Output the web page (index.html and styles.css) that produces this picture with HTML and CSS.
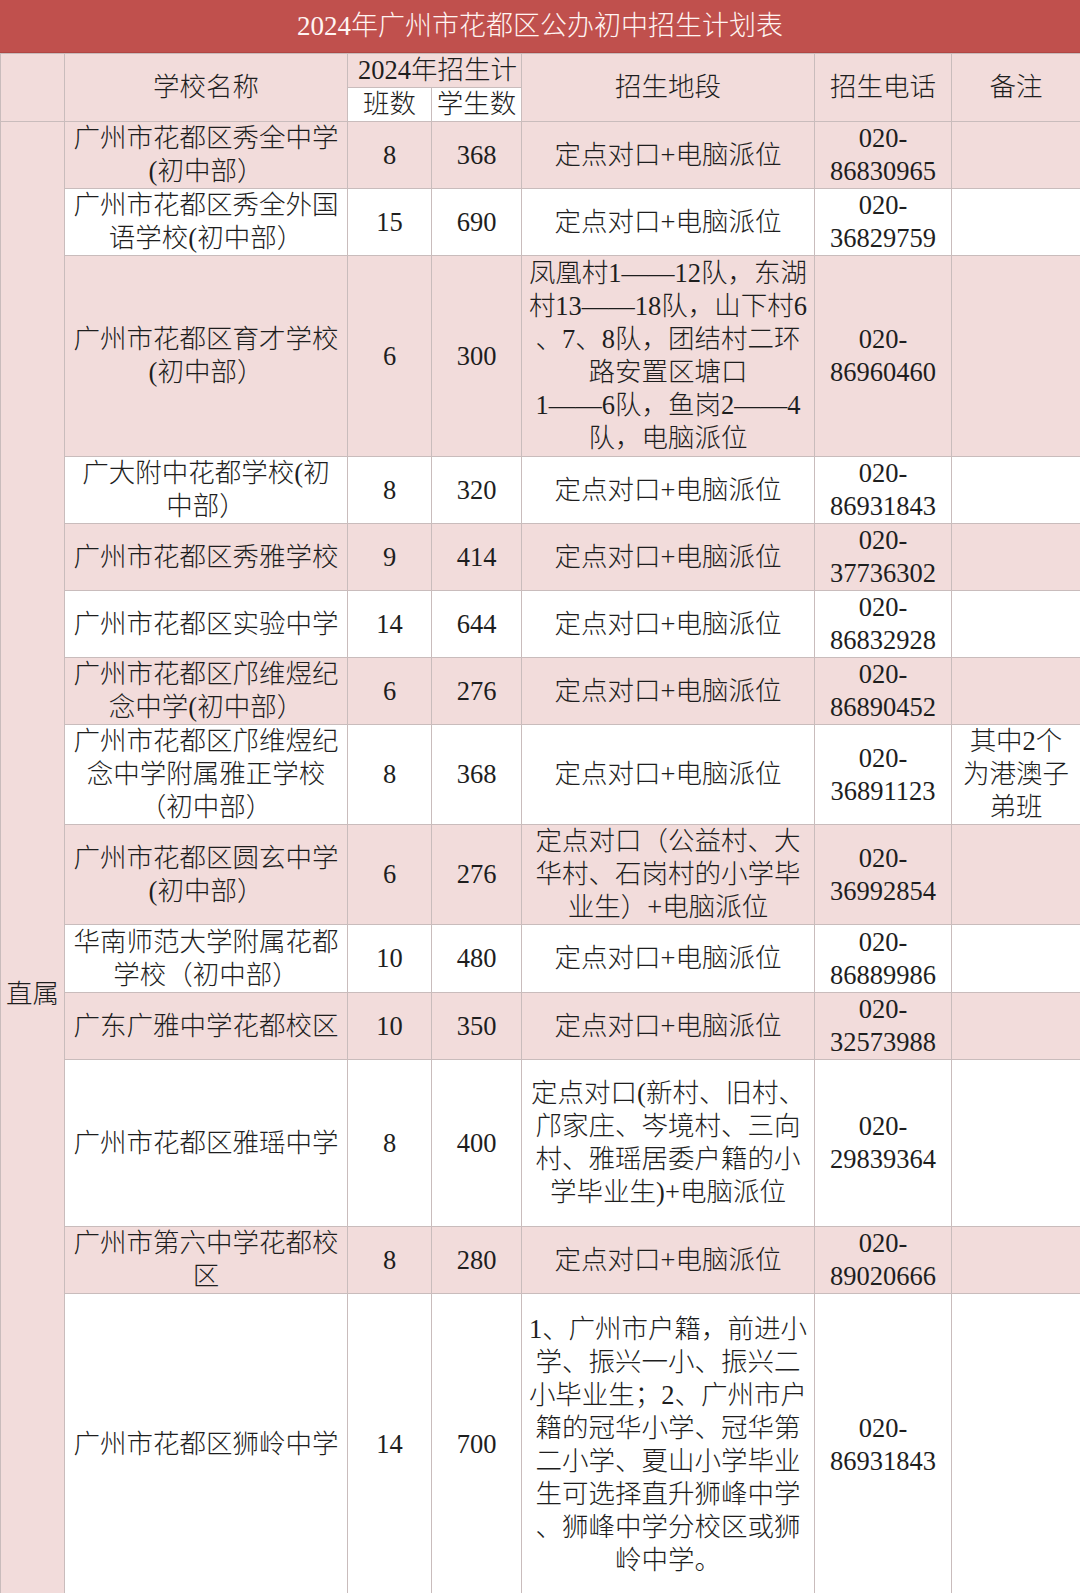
FILE: index.html
```html
<!DOCTYPE html>
<html lang="zh-CN">
<head>
<meta charset="utf-8">
<title>2024年广州市花都区公办初中招生计划表</title>
<link rel="stylesheet" href="styles.css">
</head>
<body>
<div class="sheet">
  <div class="title">2024年广州市花都区公办初中招生计划表</div>
  <table class="plan">
    <colgroup>
      <col class="c-cat">
      <col class="c-name">
      <col class="c-cls">
      <col class="c-stu">
      <col class="c-area">
      <col class="c-tel">
      <col class="c-note">
    </colgroup>
    <thead>
      <tr class="h-top">
        <th rowspan="2" class="pink"></th>
        <th rowspan="2" class="pink">学校名称</th>
        <th colspan="2" class="pink plan-head">2024年招生计</th>
        <th rowspan="2" class="pink">招生地段</th>
        <th rowspan="2" class="pink">招生电话</th>
        <th rowspan="2" class="pink">备注</th>
      </tr>
      <tr class="h-sub">
        <th class="white">班数</th>
        <th class="white">学生数</th>
      </tr>
    </thead>
    <tbody>
      <tr class="pink r67">
        <td rowspan="14" class="cat">直属</td>
        <td>广州市花都区秀全中学<br>(初中部）</td>
        <td>8</td><td>368</td>
        <td>定点对口+电脑派位</td>
        <td>020-<br>86830965</td>
        <td></td>
      </tr>
      <tr class="white r67">
        <td>广州市花都区秀全外国<br>语学校(初中部）</td>
        <td>15</td><td>690</td>
        <td>定点对口+电脑派位</td>
        <td>020-<br>36829759</td>
        <td></td>
      </tr>
      <tr class="pink r201">
        <td>广州市花都区育才学校<br>(初中部）</td>
        <td>6</td><td>300</td>
        <td>凤凰村1——12队，东湖<br>村13——18队，山下村6<br>、7、8队，团结村二环<br>路安置区塘口<br>1——6队，鱼岗2——4<br>队，电脑派位</td>
        <td>020-<br>86960460</td>
        <td></td>
      </tr>
      <tr class="white r67">
        <td>广大附中花都学校(初<br>中部）</td>
        <td>8</td><td>320</td>
        <td>定点对口+电脑派位</td>
        <td>020-<br>86931843</td>
        <td></td>
      </tr>
      <tr class="pink r67">
        <td>广州市花都区秀雅学校</td>
        <td>9</td><td>414</td>
        <td>定点对口+电脑派位</td>
        <td>020-<br>37736302</td>
        <td></td>
      </tr>
      <tr class="white r66">
        <td>广州市花都区实验中学</td>
        <td>14</td><td>644</td>
        <td>定点对口+电脑派位</td>
        <td>020-<br>86832928</td>
        <td></td>
      </tr>
      <tr class="pink r67">
        <td>广州市花都区邝维煜纪<br>念中学(初中部）</td>
        <td>6</td><td>276</td>
        <td>定点对口+电脑派位</td>
        <td>020-<br>86890452</td>
        <td></td>
      </tr>
      <tr class="white r100">
        <td>广州市花都区邝维煜纪<br>念中学附属雅正学校<br>（初中部）</td>
        <td>8</td><td>368</td>
        <td>定点对口+电脑派位</td>
        <td>020-<br>36891123</td>
        <td>其中2个<br>为港澳子<br>弟班</td>
      </tr>
      <tr class="pink r100">
        <td>广州市花都区圆玄中学<br>(初中部）</td>
        <td>6</td><td>276</td>
        <td>定点对口（公益村、大<br>华村、石岗村的小学毕<br>业生）+电脑派位</td>
        <td>020-<br>36992854</td>
        <td></td>
      </tr>
      <tr class="white r68">
        <td>华南师范大学附属花都<br>学校（初中部）</td>
        <td>10</td><td>480</td>
        <td>定点对口+电脑派位</td>
        <td>020-<br>86889986</td>
        <td></td>
      </tr>
      <tr class="pink r67">
        <td>广东广雅中学花都校区</td>
        <td>10</td><td>350</td>
        <td>定点对口+电脑派位</td>
        <td>020-<br>32573988</td>
        <td></td>
      </tr>
      <tr class="white r167">
        <td>广州市花都区雅瑶中学</td>
        <td>8</td><td>400</td>
        <td>定点对口(新村、旧村、<br>邝家庄、岑境村、三向<br>村、雅瑶居委户籍的小<br>学毕业生)+电脑派位</td>
        <td>020-<br>29839364</td>
        <td></td>
      </tr>
      <tr class="pink r67">
        <td>广州市第六中学花都校<br>区</td>
        <td>8</td><td>280</td>
        <td>定点对口+电脑派位</td>
        <td>020-<br>89020666</td>
        <td></td>
      </tr>
      <tr class="white r302">
        <td>广州市花都区狮岭中学</td>
        <td>14</td><td>700</td>
        <td>1、广州市户籍，前进小<br>学、振兴一小、振兴二<br>小毕业生；2、广州市户<br>籍的冠华小学、冠华第<br>二小学、夏山小学毕业<br>生可选择直升狮峰中学<br>、狮峰中学分校区或狮<br>岭中学。</td>
        <td>020-<br>86931843</td>
        <td></td>
      </tr>
    </tbody>
  </table>
</div>
</body>
</html>
```

FILE: styles.css
```css
* { box-sizing: border-box; }

html, body {
  margin: 0;
  padding: 0;
  background: #ffffff;
}

body {
  width: 1080px;
  font-family: "Liberation Serif", "Noto Sans CJK SC", serif;
  color: #1e1e1e;
}

.sheet {
  width: 1080px;
  overflow: hidden;
}

.title {
  height: 53px;
  background: #c0504d;
  color: #fff4f2;
  font-size: 27px;
  line-height: 53px;
  text-align: center;
  font-weight: 300;
  border-bottom: 1px solid #b04643;
}

.plan {
  width: 1080px;
  border-collapse: collapse;
  table-layout: fixed;
  font-size: 26.5px;
  line-height: 33px;
  font-weight: 300;
}

.c-cat { width: 64px; }
.c-name { width: 283px; }
.c-cls { width: 84px; }
.c-stu { width: 90px; }
.c-area { width: 293px; }
.c-tel { width: 137px; }
.c-note { width: 129px; }

.plan th,
.plan td {
  border: 1px solid #c9bcbc;
  padding: 0;
  text-align: center;
  vertical-align: middle;
  white-space: nowrap;
  overflow: hidden;
  font-weight: 300;
}

.plan th.pink,
tr.pink td {
  background: #f2dcdb;
}

.plan th.white,
tr.white td {
  background: #ffffff;
}

.h-top { height: 34px; }
.h-sub { height: 33px; }

.plan-head {
  text-align: left;
  padding-left: 6px !important;
}

.plan tbody td.cat {
  background: #f2dcdb;
  vertical-align: top;
  padding-top: 856px;
}

.r66 { height: 66px; }
.r67 { height: 67px; }
.r68 { height: 68px; }
.r100 { height: 100px; }
.r167 { height: 167px; }
.r201 { height: 201px; }
.r302 { height: 302px; }
```
